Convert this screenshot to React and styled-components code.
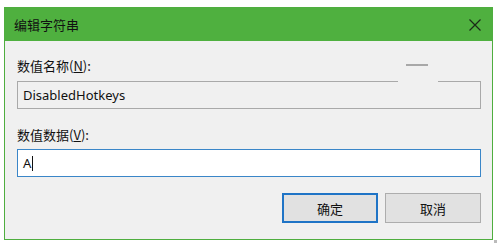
import React from "react";
import styled, { createGlobalStyle } from "styled-components";

const Global = createGlobalStyle`
  html, body { margin: 0; padding: 0; background: #ffffff; }
  body { font-family: "Noto Sans", "Noto Sans CJK SC", sans-serif; }
`;

const Page = styled.div`
  width: 497px;
  height: 250px;
  padding: 7px 0 0 4px;
  box-sizing: border-box;
`;

const Window = styled.div`
  width: 489px;
  height: 233px;
  box-sizing: border-box;
  border: 1px solid #4fae3f;
  background: #f0f0f0;
  display: flex;
  flex-direction: column;
  position: relative;
`;

const TitleBar = styled.div`
  height: 33px;
  background: #4fb03f;
  display: flex;
  align-items: center;
  justify-content: space-between;
  padding: 0 10px 0 9px;
  flex-shrink: 0;
`;

const Title = styled.div`
  font-family: "Noto Sans CJK SC", sans-serif;
  font-size: 13px;
  color: #111;
  line-height: 16px;
  margin-top: 1px;
`;

const CloseIcon = styled.svg`
  width: 12px;
  height: 12px;
  margin-right: 1px;
  margin-top: 1px;
`;

const Body = styled.div`
  padding: 17px 11px 0 12px;
  display: flex;
  flex-direction: column;
`;

const Label = styled.div`
  font-family: "Noto Sans CJK SC", sans-serif;
  font-size: 13px;
  line-height: 16px;
  color: #111;
  height: 16px;
  margin-top: ${(p) => p.$top || 0}px;
  margin-bottom: ${(p) => p.$bottom || 0}px;
  u { text-decoration: underline; text-underline-offset: 1px; }
`;

const Field = styled.div`
  position: relative;
  height: 28px;
  box-sizing: border-box;
  border: 1px solid ${(p) => (p.$focused ? "#3a86c8" : "#a9a9a9")};
  background: ${(p) => (p.$focused ? "#ffffff" : "#f0f0f0")};
  display: flex;
  align-items: center;
  padding-left: 5px;
  font-family: "Noto Sans", "Noto Sans CJK SC", sans-serif;
  font-size: 13px;
  color: #111;
`;

const BorderGap = styled.span`
  position: absolute;
  top: -1px;
  left: 380px;
  width: 40px;
  height: 1px;
  background: #f0f0f0;
`;

const StrayDash = styled.span`
  position: absolute;
  top: -18px;
  left: 388px;
  width: 22px;
  height: 2px;
  background: #a8a8a8;
`;

const Caret = styled.span`
  display: inline-block;
  width: 1px;
  height: 15px;
  background: #111;
  margin-left: 1px;
`;

const Buttons = styled.div`
  display: flex;
  justify-content: flex-end;
  gap: 7px;
  margin-top: 16px;
`;

const Button = styled.div`
  width: 96px;
  height: 30px;
  box-sizing: border-box;
  background: #e1e1e1;
  border: ${(p) => (p.$primary ? "2px solid #1f74c6" : "1px solid #adadad")};
  display: flex;
  align-items: center;
  justify-content: center;
  font-family: "Noto Sans CJK SC", sans-serif;
  font-size: 13px;
  color: #111;
`;

const Corner = styled.span`
  position: absolute;
  right: -5px;
  bottom: -4px;
  width: 3px;
  height: 3px;
  background: #bbb;
`;

export default function App() {
  return (
    <>
      <Global />
      <Page>
        <Window>
          <TitleBar>
            <Title>编辑字符串</Title>
            <CloseIcon viewBox="0 0 12 12">
              <path d="M0.5 0.5 L11.5 11.5 M11.5 0.5 L0.5 11.5" stroke="#1b2a18" strokeWidth="1.2" fill="none" />
            </CloseIcon>
          </TitleBar>
          <Body>
            <Label $bottom={7}>
              数值名称(<u>N</u>):
            </Label>
            <Field>
              DisabledHotkeys
              <BorderGap />
              <StrayDash />
            </Field>
            <Label $top={18} $bottom={6}>
              数值数据(<u>V</u>):
            </Label>
            <Field $focused>
              A
              <Caret />
            </Field>
            <Buttons>
              <Button $primary>确定</Button>
              <Button>取消</Button>
            </Buttons>
          </Body>
          <Corner />
        </Window>
      </Page>
    </>
  );
}
